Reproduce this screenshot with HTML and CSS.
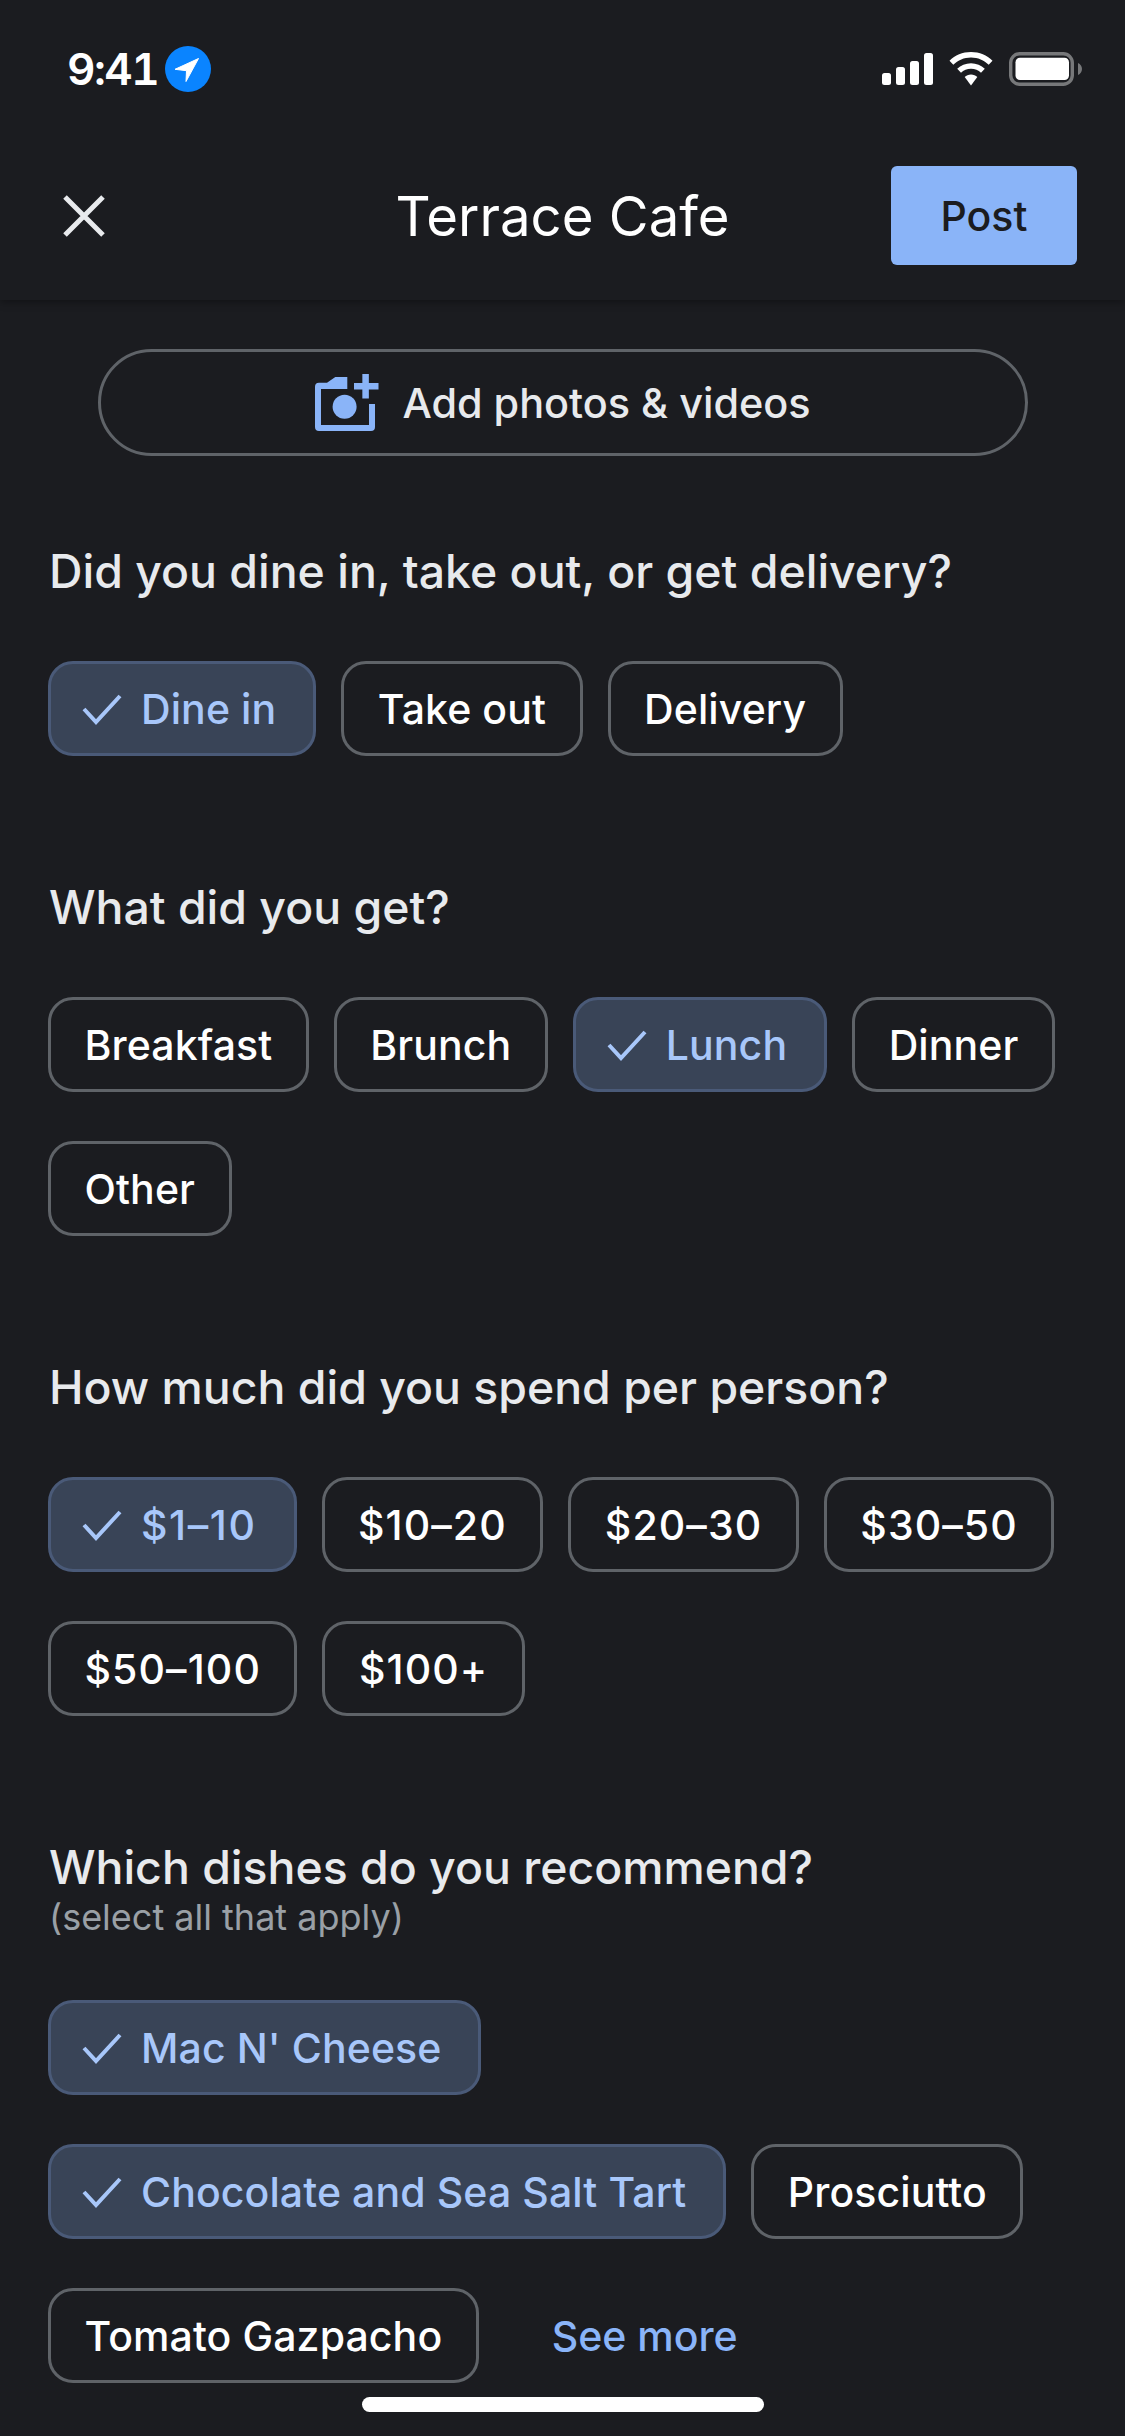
FILE: index.html
```html
<!DOCTYPE html>
<html lang="en">
<head>
<meta charset="utf-8">
<title>Terrace Cafe</title>
<link rel="stylesheet" href="styles.css">
</head>
<body>
<div class="screen">
  <header class="top">
    <div class="status">
      <div class="status-left">
        <span class="time">9:41</span>
        <svg class="loc" viewBox="0 0 46 46"><circle cx="23" cy="23" r="23" fill="#0a84ff"/><path d="M33.500 12.500 L10 23.300 L21.500 24.700 L21 35.500 Z" fill="#fff" stroke="#fff" stroke-width="1" stroke-linejoin="round"/></svg>
      </div>
      <div class="status-right">
        <svg class="signal" viewBox="0 0 51 32"><rect x="0" y="20" width="9" height="12" rx="2.500" fill="#fff"/><rect x="14" y="14" width="9" height="18" rx="2.500" fill="#fff"/><rect x="28" y="8" width="9" height="24" rx="2.500" fill="#fff"/><rect x="42" y="0" width="9" height="32" rx="2.500" fill="#fff"/></svg>
        <svg class="wifi" viewBox="0 0 44 34"><path d="M22 0C13.500 0 6 3.300 0.500 8.800L4.300 12.700C8.900 8.200 15.100 5.400 22 5.400S35.100 8.200 39.700 12.700L43.500 8.800C38 3.300 30.500 0 22 0Z" fill="#fff"/><path d="M22 11.200C16.600 11.200 11.800 13.300 8.200 16.800L12 20.700C14.600 18.200 18.100 16.700 22 16.700S29.400 18.200 32 20.700L35.800 16.800C32.200 13.300 27.400 11.200 22 11.200Z" fill="#fff"/><path d="M22 22.500C19.500 22.500 17.300 23.500 15.700 25L22 33.500L28.300 25C26.700 23.500 24.500 22.500 22 22.500Z" fill="#fff"/></svg>
        <svg class="battery" viewBox="0 0 73 34"><rect x="1.700" y="1.700" width="61.600" height="30.600" rx="9" fill="none" stroke="#77787a" stroke-width="3.400"/><rect x="6.500" y="5.700" width="53.500" height="22.300" rx="4.500" fill="#fff"/><path d="M69 11C71.500 12 73 14.500 73 17S71.500 22 69 23Z" fill="#77787a"/></svg>
      </div>
    </div>
    <div class="nav">
      <svg class="close" viewBox="0 0 42 42"><path d="M2 2 L40 40 M40 2 L2 40" fill="none" stroke="#e8eaed" stroke-width="5"/></svg>
      <h1 class="title">Terrace Cafe</h1>
      <button class="post">Post</button>
    </div>
  </header>

  <main class="content">
    <button class="add">
      <svg class="cam" viewBox="0 0 64 58"><path d="M4 8.700 H12 L20.300 3 H32.300 V15 H6 V51 H54 V30 H60 V53 Q60 57 56 57 H4 Q0 57 0 53 V12.700 Q0 8.700 4 8.700 Z" fill="#8ab4f8"/><circle cx="29.600" cy="32.700" r="12" fill="#8ab4f8"/><path d="M50.600 0 V24.500 M39 12.200 H63.500" stroke="#8ab4f8" stroke-width="6.500" fill="none"/></svg>
      <span>Add photos &amp; videos</span>
    </button>

    <section class="block block-first">
      <h2 class="q">Did you dine in, take out, or get delivery?</h2>
      <div class="chips">
        <span class="chip on"><svg class="tick" viewBox="0 0 40 32"><path d="M2 16 L14 29 L38 3" fill="none" stroke="#a8c7fa" stroke-width="4"/></svg>Dine in</span>
        <span class="chip">Take out</span>
        <span class="chip">Delivery</span>
      </div>
    </section>

    <section class="block">
      <h2 class="q">What did you get?</h2>
      <div class="chips">
        <span class="chip">Breakfast</span>
        <span class="chip">Brunch</span>
        <span class="chip on"><svg class="tick" viewBox="0 0 40 32"><path d="M2 16 L14 29 L38 3" fill="none" stroke="#a8c7fa" stroke-width="4"/></svg>Lunch</span>
        <span class="chip">Dinner</span>
        <span class="chip">Other</span>
      </div>
    </section>

    <section class="block">
      <h2 class="q">How much did you spend per person?</h2>
      <div class="chips">
        <span class="chip price on"><svg class="tick" viewBox="0 0 40 32"><path d="M2 16 L14 29 L38 3" fill="none" stroke="#a8c7fa" stroke-width="4"/></svg>$1–10</span>
        <span class="chip price">$10–20</span>
        <span class="chip price">$20–30</span>
        <span class="chip price">$30–50</span>
        <span class="chip price">$50–100</span>
        <span class="chip price">$100+</span>
      </div>
    </section>

    <section class="block">
      <h2 class="q q-tight">Which dishes do you recommend?</h2>
      <p class="sub">(select all that apply)</p>
      <div class="chips">
        <span class="chip on"><svg class="tick" viewBox="0 0 40 32"><path d="M2 16 L14 29 L38 3" fill="none" stroke="#a8c7fa" stroke-width="4"/></svg>Mac N' Cheese</span>
        <span class="chip on"><svg class="tick" viewBox="0 0 40 32"><path d="M2 16 L14 29 L38 3" fill="none" stroke="#a8c7fa" stroke-width="4"/></svg>Chocolate and Sea Salt Tart</span>
        <span class="chip">Prosciutto</span>
        <span class="chip">Tomato Gazpacho</span>
        <a class="more">See more</a>
      </div>
    </section>
  </main>
  <div class="home"></div>
</div>
</body>
</html>
```
FILE: styles.css
```css
* { box-sizing: border-box; }
html, body { margin: 0; padding: 0; background: #1b1c20; }
body { font-family: Inter, "Liberation Sans", sans-serif; color: #e8eaed; }
.screen { position: relative; width: 1125px; height: 2436px; overflow: hidden; background: #1b1c20; }
.top { height: 300px; background: #1b1c20; box-shadow: 0 2px 8px rgba(0,0,0,.35); position: relative; }
.status { height: 138px; display: flex; justify-content: space-between; align-items: flex-start; padding: 46px 43px 0 67px; }
.status-left { display: flex; align-items: center; gap: 7px; }
.time { font-size: 44px; font-weight: 600; color: #fff; line-height: 46px; font-feature-settings: "tnum"; letter-spacing: -1.5px; }
.loc { width: 46px; height: 46px; }
.status-right { display: flex; align-items: center; gap: 15px; padding-top: 6px; }
.signal { width: 51px; height: 32px; }
.wifi { width: 46px; height: 34px; }
.battery { width: 73px; height: 34px; }
.nav { height: 155px; display: flex; align-items: center; justify-content: space-between; padding: 0 48px 0 63px; position: relative; }
.close { width: 42px; height: 42px; }
.title { position: absolute; left: 0; right: 0; margin: 0; text-align: center; font-size: 54.5px; font-weight: 400; color: #fff; line-height: 70px; pointer-events: none; }
.post { width: 186px; height: 99px; border: 0; border-radius: 6px; background: #8ab4f8; color: #1b1c20; font: 500 41px Inter, sans-serif; padding: 0; position: relative; }
.content { padding: 49px 48px 0 49px; }
.add { display: flex; align-items: center; justify-content: center; gap: 23px; width: 930px; height: 107px; margin-left: 49px; border: 3px solid #5f6368; border-radius: 54px; background: transparent; color: #e8eaed; font: 500 41.4px Inter, sans-serif; padding: 0; }
.cam { width: 64px; height: 58px; }
.block { margin-top: 121px; }
.block-first { margin-top: 85px; }
.q { margin: 0 0 60px; font-size: 46.4px; font-weight: 500; line-height: 60px; color: #e8eaed; }
.q-tight { margin-bottom: 0; }
.sub { margin: -3px 0 60px; font-size: 36px; line-height: 46px; color: #9aa0a6; }
.chips { display: flex; flex-wrap: wrap; gap: 49px 25px; align-items: center; margin-left: -1px; }
.chip { display: inline-flex; align-items: center; height: 95px; padding: 0 33.5px; border: 3px solid #5f6368; border-radius: 25px; font-size: 41px; font-weight: 500; letter-spacing: 0.1px; color: #fff; white-space: nowrap; }
.chip.price { letter-spacing: 1.1px; }
.chip.price.on { letter-spacing: 1.6px; }
.chip.on { background: #394457; border-color: #4a5a78; color: #a8c7fa; padding: 0 37px 0 31px; }
.tick { width: 40px; height: 32px; margin-right: 19px; }
.more { font-size: 41px; font-weight: 500; color: #8ab4f8; margin-left: 48px; }
.home { position: absolute; left: 362px; top: 2397px; width: 402px; height: 15px; border-radius: 8px; background: #fff; }
```
